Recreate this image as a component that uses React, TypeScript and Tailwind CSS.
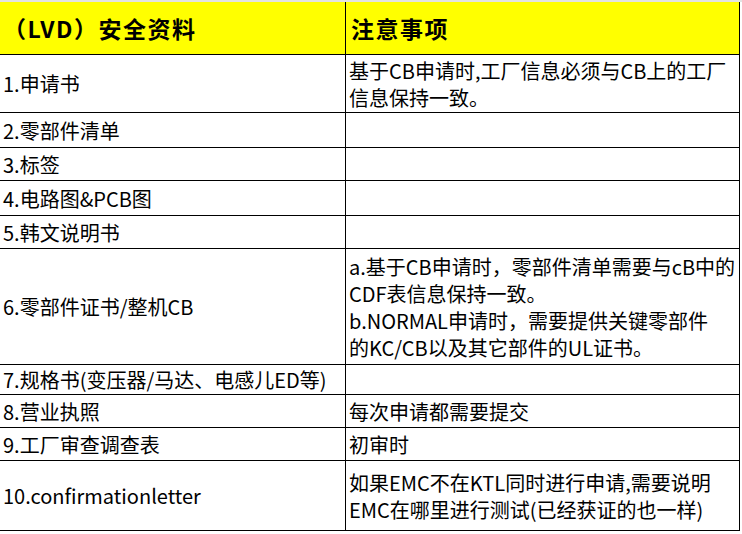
import React from 'react'

const rows = [
  { h: 'h-[58px]', left: '1.申请书', right: ['基于CB申请时,工厂信息必须与CB上的工厂', '信息保持一致。'] },
  { h: 'h-[35px]', left: '2.零部件清单', right: [] },
  { h: 'h-[33px]', left: '3.标签', right: [] },
  { h: 'h-[35px]', left: '4.电路图&PCB图', right: [] },
  { h: 'h-[33px]', left: '5.韩文说明书', right: [] },
  {
    h: 'h-[116px]',
    left: '6.零部件证书/整机CB',
    right: [
      'a.基于CB申请时，零部件清单需要与cB中的',
      'CDF表信息保持一致。',
      'b.NORMAL申请时，需要提供关键零部件',
      '的KC/CB以及其它部件的UL证书。',
    ],
  },
  { h: 'h-[30px]', left: '7.规格书(变压器/马达、电感儿ED等)', right: [] },
  { h: 'h-[33px]', left: '8.营业执照', right: ['每次申请都需要提交'] },
  { h: 'h-[33px]', left: '9.工厂审查调查表', right: ['初审时'] },
  {
    h: 'h-[70px]',
    left: '10.confirmationletter',
    right: ['如果EMC不在KTL同时进行申请,需要说明', 'EMC在哪里进行测试(已经获证的也一样)'],
  },
]

export default function App() {
  return (
    <div className="w-[742px] h-[534px] bg-white overflow-hidden text-black font-['Noto_Sans_CJK_SC','Microsoft_YaHei',sans-serif]">
      <div className="h-[2px] w-[742px] bg-[#e3e3e3]" />
      <div className="w-[740px]">
        {/* header */}
        <div className="flex h-[53px] bg-[#ffff00] border-b border-black">
          <div className="w-[346px] shrink-0 border-r border-black flex items-center pl-[3px] text-[23px] font-bold tracking-[1.5px] whitespace-nowrap">
            （LVD）安全资料
          </div>
          <div className="flex-1 border-r border-black flex items-center pl-[5px] text-[23px] font-bold tracking-[1.5px] whitespace-nowrap">
            注意事项
          </div>
        </div>

        {rows.map((row, i) => (
          <div key={i} className={`flex border-b border-black ${row.h}`}>
            <div className="w-[346px] shrink-0 border-r border-black flex items-center pl-[3px] text-[20px] leading-[27px] whitespace-nowrap">
              {row.left}
            </div>
            <div className="flex-1 border-r border-black flex flex-col justify-center pl-[3px] text-[20px] leading-[27px] whitespace-nowrap">
              {row.right.map((line, j) => (
                <div key={j}>{line}</div>
              ))}
            </div>
          </div>
        ))}
      </div>
    </div>
  )
}
